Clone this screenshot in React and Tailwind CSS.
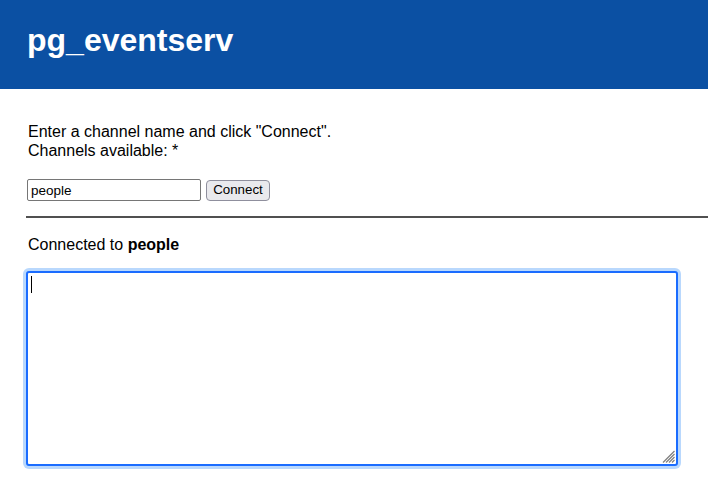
export default function App() {
  return (
    <div className="min-h-[492px] bg-white text-black" style={{ fontFamily: '"Liberation Sans", Arial, sans-serif' }}>
      <header className="h-[89px] bg-[#0b50a3] pl-[27px] pt-[22px]">
        <h1 className="text-[32px] font-bold leading-[37px] text-white">pg_eventserv</h1>
      </header>
      <main className="pl-[26px] pt-[34px]">
        <p className="ml-[2px] text-[16px] leading-[18.5px]">
          Enter a channel name and click "Connect".
          <br />
          Channels available: *
        </p>
        <div className="mt-[19px] flex items-center gap-[5px] pl-px">
          <input
            type="text"
            defaultValue="people"
            className="h-[22px] w-[174px] rounded-[2px] border border-[#767676] bg-white px-[3px] text-[13.5px] text-black outline-none"
          />
          <button className="h-[21px] w-[64px] rounded-[4px] border border-[#8f8f9d] bg-[#e9e9ed] text-[13.33px] leading-none text-black">
            Connect
          </button>
        </div>
        <div className="mt-[15px] h-[2px] bg-[#505050]" />
        <p className="ml-[2px] mt-[18px] text-[16px] leading-[18.5px]">
          Connected to <b>people</b>
        </p>
        <div className="relative mt-[16px] w-[652px]">
          <textarea
            className="block h-[195px] w-[652px] resize-none rounded-[3px] border-2 border-[#1a6cff] bg-white text-[13px] shadow-[0_0_0_3px_#b9d8fd] outline-none"
          />
          <div className="pointer-events-none absolute left-[5px] top-[5px] h-[17px] w-px bg-black" />
          <svg className="pointer-events-none absolute bottom-[3px] right-[3px]" width="13" height="13" viewBox="0 0 13 13">
            <g stroke="#808080" strokeWidth="1.2">
              <line x1="1" y1="12.5" x2="12.5" y2="1" />
              <line x1="4" y1="12.5" x2="12.5" y2="4" />
              <line x1="7" y1="12.5" x2="12.5" y2="7" />
              <line x1="10" y1="12.5" x2="12.5" y2="10" />
            </g>
          </svg>
        </div>
      </main>
    </div>
  );
}
